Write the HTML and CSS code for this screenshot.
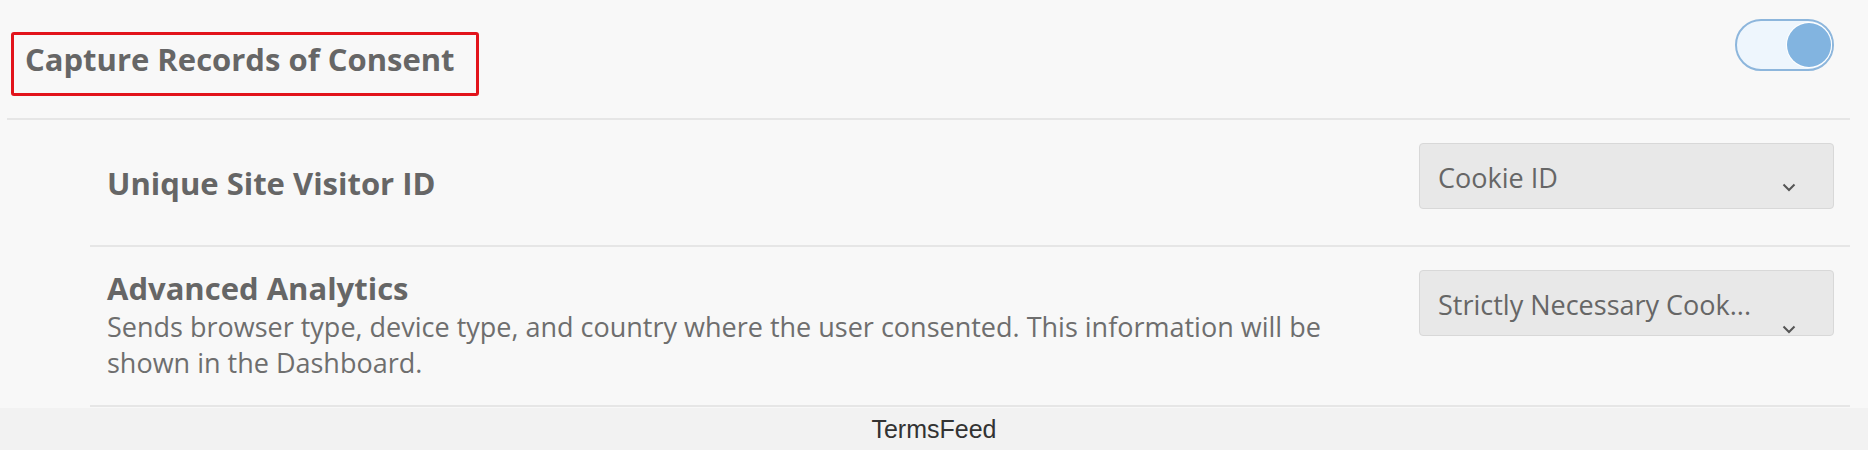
FILE: index.html
```
<!DOCTYPE html>
<html lang="en">
	<head>
		<meta charset="UTF-8" />
		<meta name="viewport" content="width=device-width, initial-scale=1.0" />
		<title>Capture Records of Consent</title>
		<link rel="stylesheet" href="styles.css">
	</head>
	<body>
		<div class="header">
			<h2 class="title-box">Capture Records of Consent</h2>
			<div class="toggle"><span class="knob"></span></div>
		</div>
		<div class="rows">
			<div class="row">
				<div class="label single">
					<div class="label-title">Unique Site Visitor ID</div>
				</div>
				<div class="select">
					<span class="select-text">Cookie ID</span>
					<svg class="chevron" width="14" height="9" viewBox="0 0 14 9"><polyline points="1.5,1.5 7,7 12.5,1.5" fill="none" stroke="#555" stroke-width="2" /></svg>
				</div>
			</div>
			<div class="row">
				<div class="label">
					<div class="label-title">Advanced Analytics</div>
					<div class="label-desc">Sends browser type, device type, and country where the user consented. This information will be shown in the Dashboard.</div>
				</div>
				<div class="select">
					<span class="select-text">Strictly Necessary Cook...</span>
					<svg class="chevron low" width="14" height="9" viewBox="0 0 14 9"><polyline points="1.5,1.5 7,7 12.5,1.5" fill="none" stroke="#555" stroke-width="2" /></svg>
				</div>
			</div>
		</div>
		<div class="footer">TermsFeed</div>
	</body>
</html>
```

FILE: styles.css
```
* {
	box-sizing: border-box;
}
body {
	margin: 0;
	height: 100vh;
	overflow: hidden;
	background-color: rgb(248, 248, 248);
	font-family: 'Open Sans', sans-serif;
	color: rgb(102, 102, 102);
}
.header {
	display: flex;
	justify-content: space-between;
	align-items: flex-start;
	margin: 0 18px 0 7px;
	padding: 19px 16px 22px 4px;
	border-bottom: 2px solid rgb(230, 230, 230);
}
.title-box {
	margin: 13px 0 0 0;
	padding: 3px 21px 13px 11px;
	border: 3px solid rgb(226, 19, 27);
	border-radius: 3px;
	font-size: 31px;
	font-weight: 700;
	line-height: normal;
}
.toggle {
	width: 99px;
	height: 52px;
	border: 2px solid rgb(141, 182, 220);
	border-radius: 26px;
	background-color: rgb(238, 246, 253);
	display: flex;
	justify-content: flex-end;
	align-items: center;
	padding-right: 1px;
}
.knob {
	width: 44px;
	height: 44px;
	border-radius: 50%;
	background-color: rgb(130, 180, 224);
	box-shadow: 0 0 0 1px #fff;
}
.rows {
	margin: 0 18px 0 90px;
}
.row {
	display: flex;
	justify-content: space-between;
	align-items: flex-start;
	gap: 60px;
	padding: 23px 16px 24px 17px;
	border-bottom: 2px solid rgb(230, 230, 230);
}
.label {
	flex: 1;
}
.label.single {
	padding: 22px 0 20px 0;
}
.label-title {
	font-size: 31px;
	font-weight: 700;
	line-height: 36px;
}
.label-desc {
	margin-top: 3px;
	font-size: 27px;
	line-height: 36px;
	color: rgb(110, 110, 110);
}
.select {
	width: 415px;
	height: 66px;
	flex-shrink: 0;
	display: flex;
	align-items: flex-start;
	justify-content: space-between;
	padding: 0 37px 0 18px;
	border: 1px solid rgb(216, 216, 216);
	border-radius: 4px;
	background-color: rgb(232, 232, 232);
}
.select-text {
	padding-top: 15px;
	font-size: 27px;
	white-space: nowrap;
}
.chevron {
	margin-top: 39px;
}
.chevron.low {
	margin-top: 54px;
}
.footer {
	margin-top: 1px;
	height: 43px;
	display: flex;
	justify-content: center;
	align-items: center;
	background-color: rgb(242, 242, 242);
	font-family: 'Liberation Sans', Arial, sans-serif;
	font-size: 25px;
	color: rgb(51, 51, 51);
}
```
